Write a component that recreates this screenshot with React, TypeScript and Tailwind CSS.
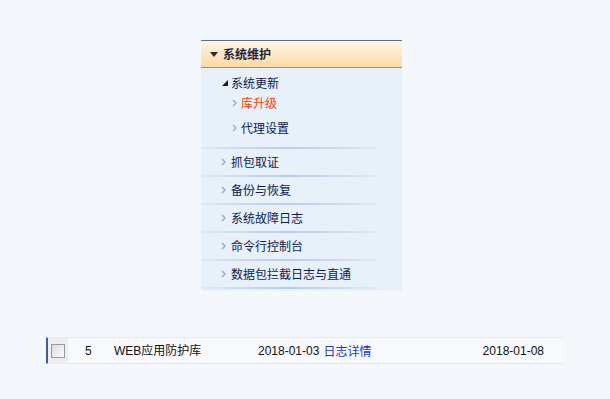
const FONT = "font-['SimSun','Noto_Sans_CJK_SC',sans-serif]";

const topItems = ['抓包取证', '备份与恢复', '系统故障日志', '命令行控制台', '数据包拦截日志与直通'];

function Chevron() {
  return (
    <svg width="5" height="8" viewBox="0 0 5 8" className="shrink-0">
      <path d="M1 1 L4 4 L1 7" fill="none" stroke="#9fadc2" strokeWidth="1.5" />
    </svg>
  );
}

function Separator() {
  return <div className="h-[2px] w-[175px] bg-gradient-to-r from-[#dfe8f5] via-[#b9cbe6] to-[#dfe8f5]" />;
}

export default function App() {
  return (
    <div className={`min-h-[399px] w-[610px] bg-[#f4f8fc] pt-[40px] text-[12px] ${FONT}`}>
      <div className="ml-[201px] w-[201px]">
        <div className="flex h-[28px] items-center gap-[5px] border-t border-b border-t-[#5b6f8f] border-b-[#7c95b7] bg-gradient-to-b from-[#fdf5e8] to-[#fdd9a3] pl-[9px]">
          <svg width="8" height="5" viewBox="0 0 8 5">
            <path d="M0 0 H8 L4 5 Z" fill="#2b2b2b" />
          </svg>
          <span className="font-bold text-[#1c2340]">系统维护</span>
        </div>
        <div className="bg-[#e8f0fa] pb-[2px]">
          <div className="flex h-[21px] items-center gap-[3px] pl-[21px] pt-[9px] text-[#0d1a4d]">
            <svg width="6" height="6" viewBox="0 0 6 6">
              <path d="M6 0 V6 H0 Z" fill="#1a1a1a" />
            </svg>
            <span>系统更新</span>
          </div>
          <div className="mt-[4px] flex h-[20px] items-center gap-[4px] pl-[31px] text-[#ff3b00]">
            <Chevron />
            <span>库升级</span>
          </div>
          <div className="mt-[5px] flex h-[20px] items-center gap-[4px] pl-[31px] text-[#0d1a4d]">
            <Chevron />
            <span>代理设置</span>
          </div>
          <div className="mt-[9px]">
            <Separator />
            {topItems.map((item) => (
              <div key={item}>
                <div className="flex h-[26px] items-center gap-[5px] pl-[20px] text-[#0d1a4d]">
                  <Chevron />
                  <span>{item}</span>
                </div>
                <Separator />
              </div>
            ))}
          </div>
        </div>
      </div>

      <div className="ml-[46px] mt-[46px] flex h-[27px] w-[517px] items-center border-y border-y-[#e6ebf2] border-l-2 border-l-[#4b5d8e] bg-[#f7f9fc] text-[#111]">
        <div className="flex h-full w-[20px] items-center justify-center bg-[#eceef2]">
          <div className="h-[14px] w-[14px] border border-[#9a9a9a] bg-gradient-to-br from-[#dcdcdc] to-[#fbfbfb]" />
        </div>
        <span className="ml-[17px] w-[29px] font-['Liberation_Sans',sans-serif]">5</span>
        <span className="w-[144px] font-['Liberation_Sans','Noto_Sans_CJK_SC',sans-serif]">WEB应用防护库</span>
        <span className="font-['Liberation_Sans',sans-serif]">2018-01-03</span>
        <a className="ml-[4px] text-[#2233cc]">日志详情</a>
        <span className="ml-auto mr-[19px] font-['Liberation_Sans',sans-serif]">2018-01-08</span>
      </div>
    </div>
  );
}
